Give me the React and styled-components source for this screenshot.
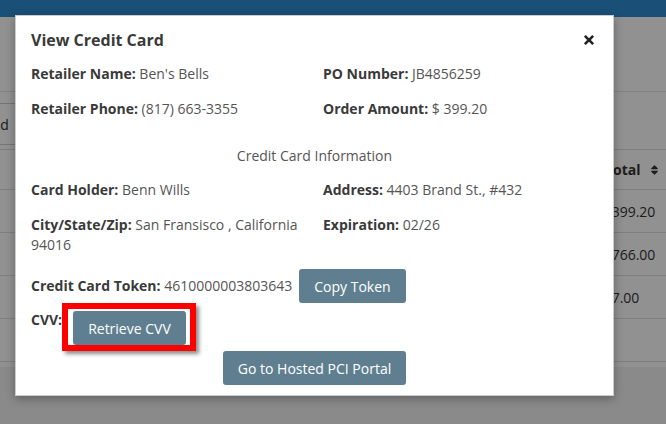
import React from 'react';
import styled, { createGlobalStyle } from 'styled-components';
import { FaTimes, FaSort } from 'react-icons/fa';

const GlobalStyle = createGlobalStyle`
  * {
    box-sizing: border-box;
  }

  html, body {
    margin: 0;
    padding: 0;
  }

  body {
    width: 666px;
    height: 424px;
    overflow: hidden;
    font-family: "Open Sans", "Liberation Sans", sans-serif;
    font-size: 14px;
    color: #333;
    background: #f2f2f2;
  }
`;

const Page = styled.div`
  position: relative;
  height: 424px;
  display: flex;
  flex-direction: column;
`;

const Navbar = styled.header`
  flex-shrink: 0;
  height: 17px;
  background: #2f8bd1;
`;

const Content = styled.main`
  height: 350px;
  background: #fff;
  overflow: hidden;
`;

const Toolbar = styled.div`
  height: 75px;
  border-bottom: 1px solid #e4e4e4;
`;

const FilterBar = styled.div`
  display: flex;
  height: 57px;
  padding-top: 11px;
`;

const FilterButton = styled.button`
  height: 42px;
  margin-left: -62px;
  padding: 0 6px;
  border: 1px solid #ccc;
  background: #fff;
  color: #333;
  font: inherit;
`;

const Table = styled.table`
  width: 100%;
  table-layout: fixed;
  border-collapse: collapse;
`;

const Th = styled.th`
  width: ${(p) => p.$width || 'auto'};
  height: 40px;
  padding: 0 8px 0 ${(p) => p.$indent || 8}px;
  text-align: left;
  font-weight: 700;
  border-top: 1px solid #ddd;
  border-bottom: 1px solid #ddd;
  white-space: nowrap;
  overflow: hidden;

  svg {
    width: 9px;
    height: 12px;
    margin-left: 9px;
    vertical-align: -1px;
  }
`;

const Td = styled.td`
  height: 43px;
  padding: 0 8px 0 ${(p) => p.$indent || 8}px;
  border-bottom: 1px solid #ddd;
  white-space: nowrap;
  overflow: hidden;
`;

const Overlay = styled.div`
  position: absolute;
  inset: 0;
  display: flex;
  align-items: flex-start;
  padding: 15px;
  background: rgba(0, 0, 0, 0.43);
`;

const Modal = styled.section`
  width: 599px;
  background: #fff;
  border: 1px solid rgba(0, 0, 0, 0.2);
  box-shadow: 0 3px 9px rgba(0, 0, 0, 0.3);
  color: #555;
`;

const ModalHeader = styled.div`
  display: flex;
  align-items: center;
  justify-content: space-between;
  padding: 13px 15px 0;
`;

const ModalTitle = styled.h4`
  margin: 0;
  font-size: 16px;
  line-height: 22px;
  font-weight: 700;
  color: #3a3a3a;
`;

const CloseButton = styled.button`
  display: flex;
  margin-right: 3px;
  padding: 0;
  border: 0;
  background: none;
  color: #222;

  svg {
    width: 12px;
    height: 14px;
  }
`;

const ModalBody = styled.div`
  display: flex;
  flex-direction: column;
  padding: 13px 15px 10px;
  line-height: 20px;
`;

const InfoGrid = styled.div`
  display: grid;
  grid-template-columns: 277px 1fr;
  column-gap: 15px;
  row-gap: 15px;
`;

const Field = styled.div`
  color: #555;
`;

const Label = styled.strong`
  font-weight: 700;
  color: #3a3a3a;
`;

const SectionTitle = styled.div`
  margin: 27px 0 14px;
  text-align: center;
  color: #555;
`;

const TokenRow = styled.div`
  display: flex;
  align-items: center;
  height: 34px;
  margin-top: 14px;
`;

const CvvRow = styled.div`
  display: flex;
  align-items: flex-start;
`;

const CvvLabel = styled(Label)`
  margin-top: 7px;
`;

const Highlight = styled.span`
  display: inline-flex;
  padding: 2px 4px 0 5px;
  border: 6px solid #ff0000;
  box-shadow: 3px 3px 4px rgba(0, 0, 0, 0.45);
`;

const PortalRow = styled.div`
  display: flex;
  justify-content: center;
`;

const Button = styled.button`
  height: 34px;
  margin-left: ${(p) => p.$gap || 0}px;
  padding: 0 15px;
  border: 0;
  border-radius: 3px;
  background: #5f7f90;
  color: #fff;
  font-family: inherit;
  font-size: 14px;
  white-space: nowrap;
`;

const orders = [
  ['03/02/2024', 'Ben\'s Bells', 'JB4856259', 'Open', '$ 399.20'],
  ['02/27/2024', 'Harbor Gifts', 'HG2219034', 'Shipped', '$ 766.00'],
  ['02/21/2024', 'Lakeside Goods', 'LG1180457', 'Shipped', '$ 7.00'],
  ['02/18/2024', 'Maple & Co.', 'MC9930112', 'Closed', ''],
];

const App = () => (
  <Page>
    <GlobalStyle />
    <Navbar />
    <Content>
      <Toolbar />
      <FilterBar>
        <FilterButton>Advanced</FilterButton>
      </FilterBar>
      <Table>
        <thead>
          <tr>
            <Th $indent={30}>Date</Th>
            <Th>Retailer</Th>
            <Th>PO Number</Th>
            <Th>Status</Th>
            <Th $width="74px" $indent={13}>
              Total
              <FaSort />
            </Th>
          </tr>
        </thead>
        <tbody>
          {orders.map((row) => (
            <tr key={row[2]}>
              <Td $indent={30}>{row[0]}</Td>
              <Td>{row[1]}</Td>
              <Td>{row[2]}</Td>
              <Td>{row[3]}</Td>
              <Td>{row[4]}</Td>
            </tr>
          ))}
        </tbody>
      </Table>
    </Content>

    <Overlay>
      <Modal>
        <ModalHeader>
          <ModalTitle>View Credit Card</ModalTitle>
          <CloseButton aria-label="Close">
            <FaTimes />
          </CloseButton>
        </ModalHeader>
        <ModalBody>
          <InfoGrid>
            <Field>
              <Label>Retailer Name:</Label> Ben's Bells
            </Field>
            <Field>
              <Label>PO Number:</Label> JB4856259
            </Field>
            <Field>
              <Label>Retailer Phone:</Label> (817) 663-3355
            </Field>
            <Field>
              <Label>Order Amount:</Label> $ 399.20
            </Field>
          </InfoGrid>

          <SectionTitle>Credit Card Information</SectionTitle>

          <InfoGrid>
            <Field>
              <Label>Card Holder:</Label> Benn Wills
            </Field>
            <Field>
              <Label>Address:</Label> 4403 Brand St., #432
            </Field>
            <Field>
              <Label>City/State/Zip:</Label> San Fransisco , California 94016
            </Field>
            <Field>
              <Label>Expiration:</Label> 02/26
            </Field>
          </InfoGrid>

          <TokenRow>
            <Field>
              <Label>Credit Card Token:</Label> 4610000003803643
            </Field>
            <Button $gap={7}>Copy Token</Button>
          </TokenRow>

          <CvvRow>
            <CvvLabel>CVV:</CvvLabel>
            <Highlight>
              <Button>Retrieve CVV</Button>
            </Highlight>
          </CvvRow>

          <PortalRow>
            <Button>Go to Hosted PCI Portal</Button>
          </PortalRow>
        </ModalBody>
      </Modal>
    </Overlay>
  </Page>
);

export default App;
